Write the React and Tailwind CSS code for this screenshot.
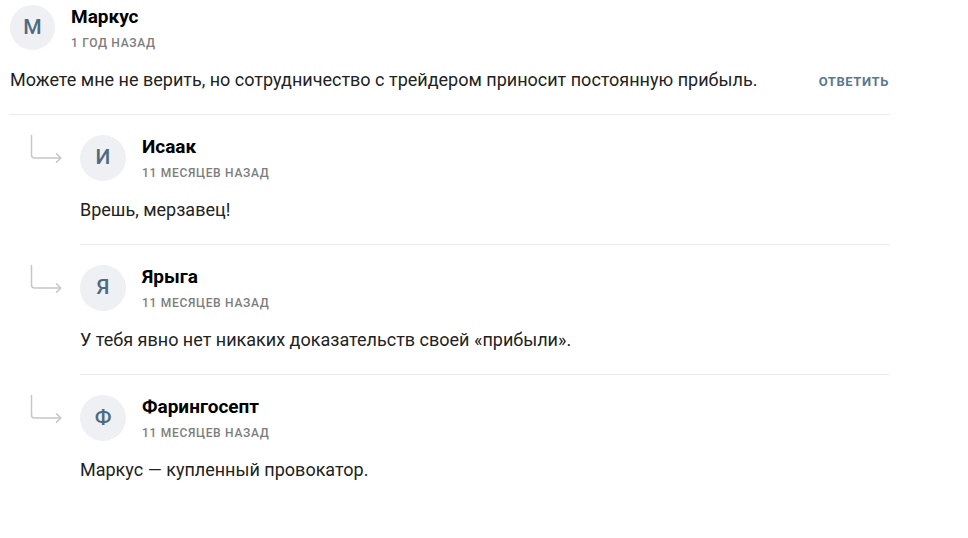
import React from "react";

const REPLIES = [
  { letter: "И", name: "Исаак", time: "11 месяцев назад", text: "Врешь, мерзавец!", divider: true },
  { letter: "Я", name: "Ярыга", time: "11 месяцев назад", text: "У тебя явно нет никаких доказательств своей «прибыли».", divider: true },
  { letter: "Ф", name: "Фарингосепт", time: "11 месяцев назад", text: "Маркус — купленный провокатор.", divider: false },
];

function Avatar({ letter, size }) {
  return (
    <div
      className={`${size} shrink-0 rounded-full bg-[#eef0f3] flex items-center justify-center text-[21px] font-medium text-[#4e6a80]`}
    >
      {letter}
    </div>
  );
}

function ReplyArrow() {
  return (
    <svg width="34" height="30" viewBox="0 0 34 30" fill="none" stroke="#c6c6c6" strokeWidth="1.5" strokeLinecap="round" strokeLinejoin="round">
      <path d="M1.5 0 V20 Q1.5 23 4.5 23 H30.5" />
      <path d="M26.5 18.8 L30.7 23 L26.5 27.2" />
    </svg>
  );
}

export default function App() {
  return (
    <div className="w-[968px] h-[538px] bg-white px-[10px] font-['Roboto',sans-serif] text-[#222]">
      <div className="w-[880px]">
        <div className="pt-[5px] flex">
          <Avatar letter="М" size="w-[45px] h-[45px]" />
          <div className="ml-4">
            <div className="mt-[1px] text-[19px] leading-[22px] font-bold text-black">Маркус</div>
            <div className="mt-[7px] text-[12px] leading-[16px] font-medium uppercase tracking-[0.7px] text-[#7d7d7d]">1 год назад</div>
          </div>
        </div>
        <div className="mt-[17px] flex items-center justify-between">
          <p className="text-[18px] leading-[24px]">
            Можете мне не верить, но сотрудничество с трейдером приносит постоянную прибыль.
          </p>
          <button className="mt-[3px] text-[13px] leading-[16px] font-bold uppercase tracking-[0.6px] text-[#5a7890] pr-[1px]">
            Ответить
          </button>
        </div>
        <div className="mt-[22px] border-t border-[#ebebeb]" />

        {REPLIES.map((r) => (
          <div key={r.name} className="pl-[20px] pt-[20px] flex">
            <div className="w-[50px] shrink-0">
              <ReplyArrow />
            </div>
            <div className="flex-1">
              <div className="flex">
                <Avatar letter={r.letter} size="w-[46px] h-[46px]" />
                <div className="ml-4">
                  <div className="mt-[1px] text-[19px] leading-[22px] font-bold text-black">{r.name}</div>
                  <div className="mt-[7px] text-[12px] leading-[16px] font-medium uppercase tracking-[0.7px] text-[#7d7d7d]">{r.time}</div>
                </div>
              </div>
              <p className="mt-[17px] text-[18px] leading-[24px]">{r.text}</p>
              {r.divider && <div className="mt-[22px] border-t border-[#ebebeb]" />}
            </div>
          </div>
        ))}
      </div>
    </div>
  );
}
